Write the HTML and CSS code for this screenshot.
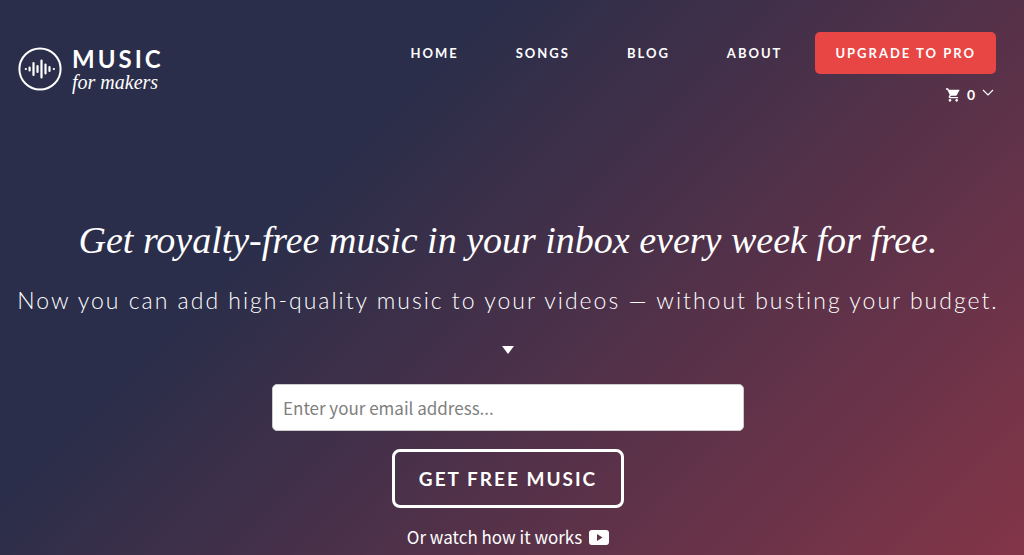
FILE: index.html
```html
<!DOCTYPE html>
<html lang="en">
<head>
    <meta charset="UTF-8">
    <meta name="viewport" content="width=device-width, initial-scale=1.0">
    <title>Music for Makers</title>
    <link rel="stylesheet" href="styles.css">
</head>
<body>
    <header class="header">
        <a class="logo" href="#">
            <svg class="logo-icon" viewBox="0 0 44 44" aria-hidden="true">
                <circle cx="22" cy="22" r="20.6" fill="none" stroke="#fff" stroke-width="2"/>
                <g stroke="#fff" stroke-width="2.2" stroke-linecap="round">
                    <path d="M7.8 22h.1M11.6 20.5v3M15.5 16v12M19.5 19v6M23.5 13.5v17M27.5 17.5v9M31.5 20v4M35.8 22h.1"/>
                </g>
            </svg>
            <span class="logo-text">
                <span class="logo-name">MUSIC</span>
                <span class="logo-tag">for makers</span>
            </span>
        </a>
        <div class="header-right">
            <nav class="nav">
                <a href="#">HOME</a>
                <a href="#">SONGS</a>
                <a href="#">BLOG</a>
                <a href="#">ABOUT</a>
                <a class="upgrade" href="#">UPGRADE TO PRO</a>
            </nav>
            <button class="cart" type="button" aria-label="Cart, 0 items">
                <svg class="cart-icon" viewBox="1 2 21 20" aria-hidden="true">
                    <path fill="#fff" d="M7 18c-1.100 0-2 .9-2 2s.9 2 2 2 2-.9 2-2-.9-2-2-2zM1 2v2h2l3.600 7.590-1.350 2.450C4.520 15.370 5.480 17 7 17h12v-2H7.420l-.12-.27.9-1.730h7.450c.75 0 1.410-.41 1.750-1.030L21.500 4H5.210l-.94-2H1zm16 16c-1.100 0-2 .9-2 2s.9 2 2 2 2-.9 2-2-.9-2-2-2z"/>
                </svg>
                <span>0</span>
                <svg class="chevron" viewBox="0 0 12 8" aria-hidden="true">
                    <path d="M1 1l5 5 5-5" fill="none" stroke="#fff" stroke-width="1.2"/>
                </svg>
            </button>
        </div>
    </header>

    <main class="hero">
        <h1>Get royalty-free music in your inbox every week for free.</h1>
        <h2>Now you can add high-quality music to your videos — without busting your budget.</h2>
        <svg class="arrow" viewBox="0 0 12 8" aria-hidden="true">
            <path d="M0 0h12L6 8z" fill="#fff"/>
        </svg>
        <form class="signup">
            <input type="email" placeholder="Enter your email address..." aria-label="Email address">
            <button type="submit">GET FREE MUSIC</button>
        </form>
        <a class="watch" href="#">
            Or watch how it works
            <svg class="play" viewBox="0 0 20 15" aria-hidden="true">
                <path fill="#fff" fill-rule="evenodd" d="M3 0h14a3 3 0 0 1 3 3v9a3 3 0 0 1-3 3H3a3 3 0 0 1-3-3V3a3 3 0 0 1 3-3zM8 4v7l5.500-3.500z"/>
            </svg>
        </a>
    </main>
</body>
</html>
```

FILE: styles.css
```css
* {
    box-sizing: border-box;
}
body {
    margin: 0;
    min-height: 100vh;
    color: #fff;
    background: linear-gradient(135deg, #2b2e4a 32%, #833548 100%);
    font-family: Lato, sans-serif;
}
a {
    color: #fff;
    text-decoration: none;
}
.header {
    display: flex;
    justify-content: space-between;
    align-items: flex-start;
    padding: 32px 28px 0 18px;
}
.logo {
    display: flex;
    align-items: center;
    gap: 10px;
    padding-top: 14px;
}
.logo-icon {
    width: 44px;
    height: 44px;
}
.logo-text {
    display: flex;
    flex-direction: column;
}
.logo-name {
    font-size: 24px;
    font-weight: 700;
    line-height: 26px;
    letter-spacing: 3px;
}
.logo-tag {
    font-family: "Liberation Serif", serif;
    font-style: italic;
    font-size: 20px;
    line-height: 20px;
}
.header-right {
    display: flex;
    flex-direction: column;
    align-items: flex-end;
    gap: 11px;
}
.nav {
    display: flex;
    align-items: center;
    gap: 57px;
    font-size: 13px;
    font-weight: 700;
    letter-spacing: 2px;
}
.upgrade {
    margin-left: -24px;
    padding: 0 20px;
    line-height: 42px;
    border-radius: 5px;
    background: #e84545;
}
.cart {
    display: flex;
    align-items: center;
    gap: 7px;
    padding: 0 2px;
    border: 0;
    background: none;
    color: #fff;
    font: 700 14px/20px Lato, sans-serif;
    cursor: pointer;
}
.cart-icon {
    width: 14px;
    height: 14px;
}
.chevron {
    width: 12px;
    height: 8px;
    margin-bottom: 4px;
}
.hero {
    display: flex;
    flex-direction: column;
    align-items: center;
    padding: 111px 8px 0 0;
    text-align: center;
}
h1 {
    margin: 0;
    font: italic 400 38px/48px "Liberation Serif", serif;
}
h2 {
    margin: 20px 0 0;
    font-size: 23px;
    font-weight: 300;
    line-height: 32px;
    letter-spacing: 2px;
}
.arrow {
    width: 12px;
    height: 8px;
    margin: 30px 0;
}
.signup {
    display: flex;
    flex-direction: column;
    align-items: center;
    width: 100%;
    gap: 18px;
}
.signup input {
    width: 100%;
    max-width: 472px;
    height: 47px;
    padding: 0 10px;
    border: 1px solid #ccc;
    border-radius: 5px;
    background: #fff;
    font: 17px "Noto Sans CJK SC", sans-serif;
}
.signup input::placeholder {
    color: #808080;
}
.signup button {
    padding: 0 24px;
    border: 3px solid #fff;
    border-radius: 8px;
    background: none;
    color: #fff;
    font: 700 19px/53px Lato, sans-serif;
    letter-spacing: 2px;
    cursor: pointer;
}
.watch {
    display: flex;
    align-items: center;
    gap: 7px;
    margin-top: 15px;
    font: 17px/28px "Noto Sans CJK SC", sans-serif;
}
.play {
    width: 20px;
    height: 15px;
}
```
